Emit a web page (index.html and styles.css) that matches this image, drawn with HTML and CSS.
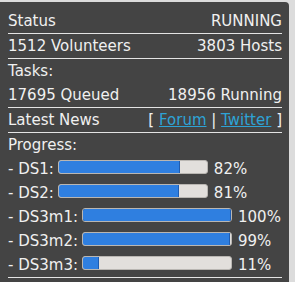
FILE: index.html
```html
<!DOCTYPE html>
<html>
<head>
<meta charset="utf-8">
<link rel="stylesheet" href="styles.css">
</head>
<body>
<div class="panel">
  <div class="row line"><span>Status</span><span>RUNNING</span></div>
  <div class="row line"><span>1512 Volunteers</span><span>3803 Hosts</span></div>
  <div class="row"><span>Tasks:</span></div>
  <div class="row line"><span>17695 Queued</span><span>18956 Running</span></div>
  <div class="row line"><span>Latest News</span><span>[ <a href="#" class="lnk">Forum</a> | <a href="#" class="lnk">Twitter</a> ]</span></div>
  <div class="row"><span>Progress:</span></div>
  <div class="prow"><span class="lbl">- DS1:</span><span class="bar"><span class="fill" style="width:82%"></span></span><span class="pct">82%</span></div>
  <div class="prow"><span class="lbl">- DS2:</span><span class="bar"><span class="fill" style="width:81%"></span></span><span class="pct">81%</span></div>
  <div class="prow"><span class="lbl">- DS3m1:</span><span class="bar"><span class="fill" style="width:100%"></span></span><span class="pct">100%</span></div>
  <div class="prow"><span class="lbl">- DS3m2:</span><span class="bar"><span class="fill" style="width:99%"></span></span><span class="pct">99%</span></div>
  <div class="prow line"><span class="lbl">- DS3m3:</span><span class="bar"><span class="fill" style="width:11%"></span></span><span class="pct">11%</span></div>
</div>
</body>
</html>
```

FILE: styles.css
```css
html, body {
  margin: 0;
  padding: 0;
}
body {
  background: #dcdcdc;
  padding-top: 2px;
  font-family: "DejaVu Sans", Verdana, sans-serif;
  font-size: 15px;
  color: #f0f0f0;
}
.panel {
  width: 274px;
  height: 273px;
  background: #444444;
  border-top-right-radius: 4px;
  padding: 7px 7px 0 8px;
}
.row {
  display: flex;
  justify-content: space-between;
  height: 24px;
  line-height: 24px;
  white-space: nowrap;
}
.line {
  border-bottom: 1px solid #e4e4e4;
}
.lnk {
  color: #2ea3d6;
  text-decoration: underline;
}
.prow {
  display: flex;
  align-items: center;
  height: 24px;
  line-height: 24px;
  white-space: nowrap;
}
.lbl {
  margin-right: 4px;
}
.bar {
  display: block;
  box-sizing: border-box;
  width: 150px;
  height: 14px;
  background: #e2dfdc;
  border: 1px solid #b9b6b2;
  border-radius: 3px;
  overflow: hidden;
  position: relative;
  top: -2px;
}
.fill {
  display: block;
  height: 100%;
  background: #2f7fe0;
  box-shadow: inset -1px 0 0 #1f5cb0;
}
.pct {
  margin-left: 6px;
}
```
